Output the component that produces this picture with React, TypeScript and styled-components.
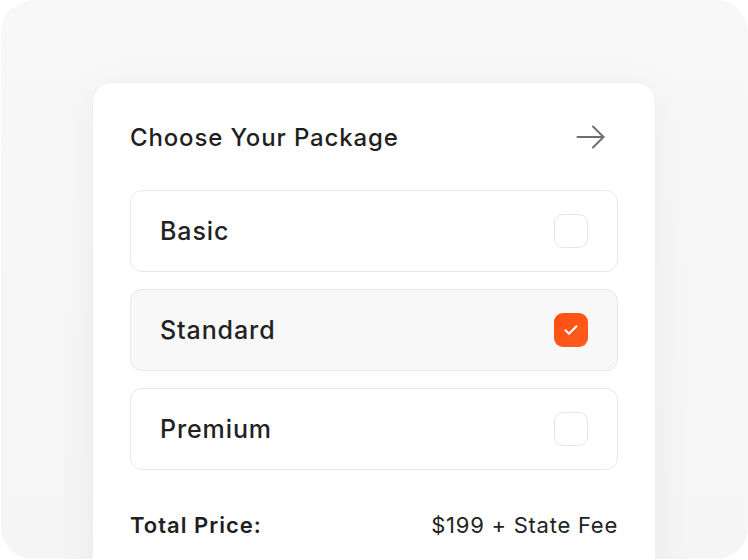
import React, {useState} from 'react';
import styled, {createGlobalStyle} from 'styled-components';

const Global = createGlobalStyle`
  html, body {
    margin: 0;
    padding: 0;
    background: #ffffff;
  }
  body {
    font-family: Inter, 'Noto Sans', sans-serif;
    color: #222222;
  }
`;

const Frame = styled.div`
  box-sizing: border-box;
  width: 747px;
  height: 559px;
  margin-left: 1px;
  padding: 82px 92px 0 91px;
  border-radius: 32px;
  overflow: hidden;
  background: linear-gradient(180deg, #f8f8f8 0%, #f5f5f5 100%);
`;

const Card = styled.div`
  box-sizing: border-box;
  height: 520px;
  padding: 36px 37px 0;
  background: #ffffff;
  border: 1px solid #efefef;
  border-radius: 20px;
  box-shadow: 0 8px 40px rgba(0, 0, 0, 0.05);
`;

const Header = styled.div`
  display: flex;
  align-items: center;
  justify-content: space-between;
  height: 36px;
  margin-bottom: 35px;
`;

const Title = styled.h2`
  margin: 0;
  font-size: 24px;
  font-weight: 500;
  letter-spacing: 0.85px;
  color: #1f1f1f;
`;

const NextButton = styled.button`
  display: flex;
  align-items: center;
  justify-content: center;
  width: 36px;
  height: 36px;
  margin-right: 9px;
  padding: 0;
  border: none;
  background: none;
  color: #6e6e6e;
  cursor: pointer;
`;

const Options = styled.div`
  display: flex;
  flex-direction: column;
  gap: 17px;
`;

const Option = styled.label<{$selected: boolean}>`
  box-sizing: border-box;
  display: flex;
  align-items: center;
  justify-content: space-between;
  height: 82px;
  padding: 0 29px 0 29px;
  border: 1.5px solid #e8e8e8;
  border-radius: 12px;
  background: ${(p) => (p.$selected ? '#f8f8f8' : '#ffffff')};
  cursor: pointer;
  input {
    display: none;
  }
`;

const OptionName = styled.span`
  font-size: 25px;
  font-weight: 500;
  letter-spacing: 0.9px;
  color: #222222;
`;

const Box = styled.span<{$checked: boolean}>`
  box-sizing: border-box;
  display: flex;
  align-items: center;
  justify-content: center;
  width: 34px;
  height: 34px;
  border-radius: 9px;
  border: ${(p) => (p.$checked ? 'none' : '1.5px solid #e6e6e6')};
  background: ${(p) =>
    p.$checked ? 'linear-gradient(135deg, #ff4d12 0%, #ff5d1f 100%)' : '#ffffff'};
`;

const Total = styled.div`
  display: flex;
  align-items: center;
  justify-content: space-between;
  height: 30px;
  margin-top: 40px;
  font-size: 22px;
`;

const TotalLabel = styled.span`
  font-weight: 600;
  letter-spacing: 1px;
  color: #1f1f1f;
`;

const TotalValue = styled.span`
  font-weight: 400;
  letter-spacing: 0.75px;
  color: #222222;
`;

const packages = ['Basic', 'Standard', 'Premium'];

const App: React.FunctionComponent = () => {
  const [active, setActive] = useState<number>(1);

  return (
    <>
      <Global />
      <Frame>
        <Card>
          <Header>
            <Title>Choose Your Package</Title>
            <NextButton aria-label="next">
              <svg width="30" height="30" viewBox="0 0 30 30" fill="none"
                stroke="currentColor" strokeWidth="2" strokeLinecap="round"
                strokeLinejoin="round">
                <path d="M1.5 15h26" />
                <path d="M17 4.5L27.5 15 17 25.5" />
              </svg>
            </NextButton>
          </Header>
          <Options>
            {packages.map((name, i) => (
              <Option key={name} $selected={active === i}>
                <input
                  type="radio"
                  name="package"
                  checked={active === i}
                  onChange={() => setActive(i)}
                />
                <OptionName>{name}</OptionName>
                <Box $checked={active === i}>
                  {active === i && (
                    <svg width="16" height="16" viewBox="0 0 16 16" fill="none"
                      stroke="#ffffff" strokeWidth="2" strokeLinecap="round"
                      strokeLinejoin="round">
                      <path d="M2.5 8.3l3.5 3.5L13.5 4.3" />
                    </svg>
                  )}
                </Box>
              </Option>
            ))}
          </Options>
          <Total>
            <TotalLabel>Total Price:</TotalLabel>
            <TotalValue>$199 + State Fee</TotalValue>
          </Total>
        </Card>
      </Frame>
    </>
  );
};

export default App;
